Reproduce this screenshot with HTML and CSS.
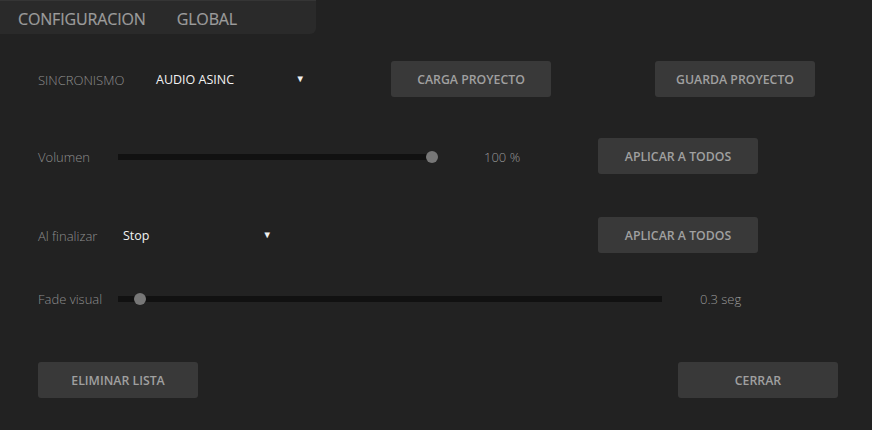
FILE: index.html
```html
<!DOCTYPE html>
<html lang="es">
<head>
<meta charset="utf-8">
<link rel="stylesheet" href="styles.css">
</head>
<body>
<div class="app">
  <div class="tabs">
    <span class="tab">CONFIGURACION</span>
    <span class="tab">GLOBAL</span>
  </div>

  <div class="row r1">
    <span class="label w-sync">SINCRONISMO</span>
    <div class="select sel-sync"><span class="val">AUDIO ASINC</span><span class="arrow">▼</span></div>
    <button class="btn">CARGA PROYECTO</button>
    <span class="spacer-a"></span>
    <button class="btn">GUARDA PROYECTO</button>
  </div>

  <div class="row r2">
    <span class="label w-80">Volumen</span>
    <div class="slider vol"><div class="track"></div><div class="thumb" style="left:100%"></div></div>
    <span class="value v-vol">100 %</span>
    <button class="btn">APLICAR A TODOS</button>
  </div>

  <div class="row r3">
    <span class="label w-85">Al finalizar</span>
    <div class="select sel-fin"><span class="val">Stop</span><span class="arrow">▼</span></div>
    <button class="btn">APLICAR A TODOS</button>
  </div>

  <div class="row r4">
    <span class="label w-80">Fade visual</span>
    <div class="slider fade"><div class="track"></div><div class="thumb" style="left:4%"></div></div>
    <span class="value v-fade">0.3 seg</span>
  </div>

  <div class="row r5">
    <button class="btn">ELIMINAR LISTA</button>
    <button class="btn">CERRAR</button>
  </div>
</div>
</body>
</html>
```

FILE: styles.css
```css
html, body {
  margin: 0;
  padding: 0;
  background: #222222;
}
body {
  width: 872px;
  height: 430px;
  overflow: hidden;
  font-family: "Open Sans", "Noto Sans", sans-serif;
}
.app {
  display: flex;
  flex-direction: column;
}
.tabs {
  width: 316px;
  height: 34px;
  box-sizing: border-box;
  background: #2a2a2a;
  border-top: 1px solid #353535;
  border-bottom-right-radius: 6px;
  display: flex;
  align-items: center;
  padding-left: 18px;
  padding-top: 3px;
  gap: 31px;
}
.tab {
  color: #9c9c9c;
  font-size: 16px;
  letter-spacing: -0.15px;
  line-height: 1;
  -webkit-text-stroke: 0.2px #9c9c9c;
}
.row {
  display: flex;
  align-items: center;
  padding-left: 38px;
}
.r1 { margin-top: 27px; height: 36px; }
.r2 { margin-top: 41px; height: 36px; }
.r3 { margin-top: 43px; height: 36px; }
.r4 { margin-top: 35px; height: 20px; }
.r5 { margin-top: 54px; height: 36px; justify-content: space-between; padding-right: 34px; }

.label {
  color: #8e8e8e;
  font-size: 13px;
  font-weight: 300;
  flex: none;
  padding-top: 1px;
}
.w-sync { width: 118px; }
.w-80 { width: 80px; }
.w-85 { width: 85px; }

.select {
  display: flex;
  align-items: center;
  justify-content: space-between;
  flex: none;
  box-sizing: border-box;
  padding-top: 1px;
}
.sel-sync { width: 150px; margin-right: 85px; }
.sel-fin { width: 150px; margin-right: 325px; }
.val {
  color: #f2f2f2;
  font-size: 12.5px;
}
.arrow {
  color: #f0f0f0;
  font-size: 9.5px;
  padding-right: 1px;
  margin-top: -3px;
}

.btn {
  flex: none;
  width: 160px;
  height: 36px;
  border: none;
  border-radius: 3px;
  background: #393939;
  color: #a0a0a0;
  font-family: "Open Sans", "Noto Sans", sans-serif;
  font-size: 12.3px;
  font-weight: 600;
  padding: 0;
}
.spacer-a { width: 104px; flex: none; }

.slider {
  position: relative;
  height: 12px;
  flex: none;
  display: flex;
  align-items: center;
  margin-top: 2px;
}
.slider.vol { width: 314px; margin-right: 52px; }
.slider.fade { width: 544px; margin-right: 38px; }
.track {
  width: 100%;
  height: 6px;
  background: #111111;
}
.thumb {
  position: absolute;
  top: 0;
  width: 12px;
  height: 12px;
  margin-left: -6px;
  border-radius: 50%;
  background: #777777;
}
.value {
  color: #999999;
  font-size: 13px;
  font-weight: 300;
  flex: none;
  padding-top: 2px;
}
.v-vol { width: 114px; }
```
